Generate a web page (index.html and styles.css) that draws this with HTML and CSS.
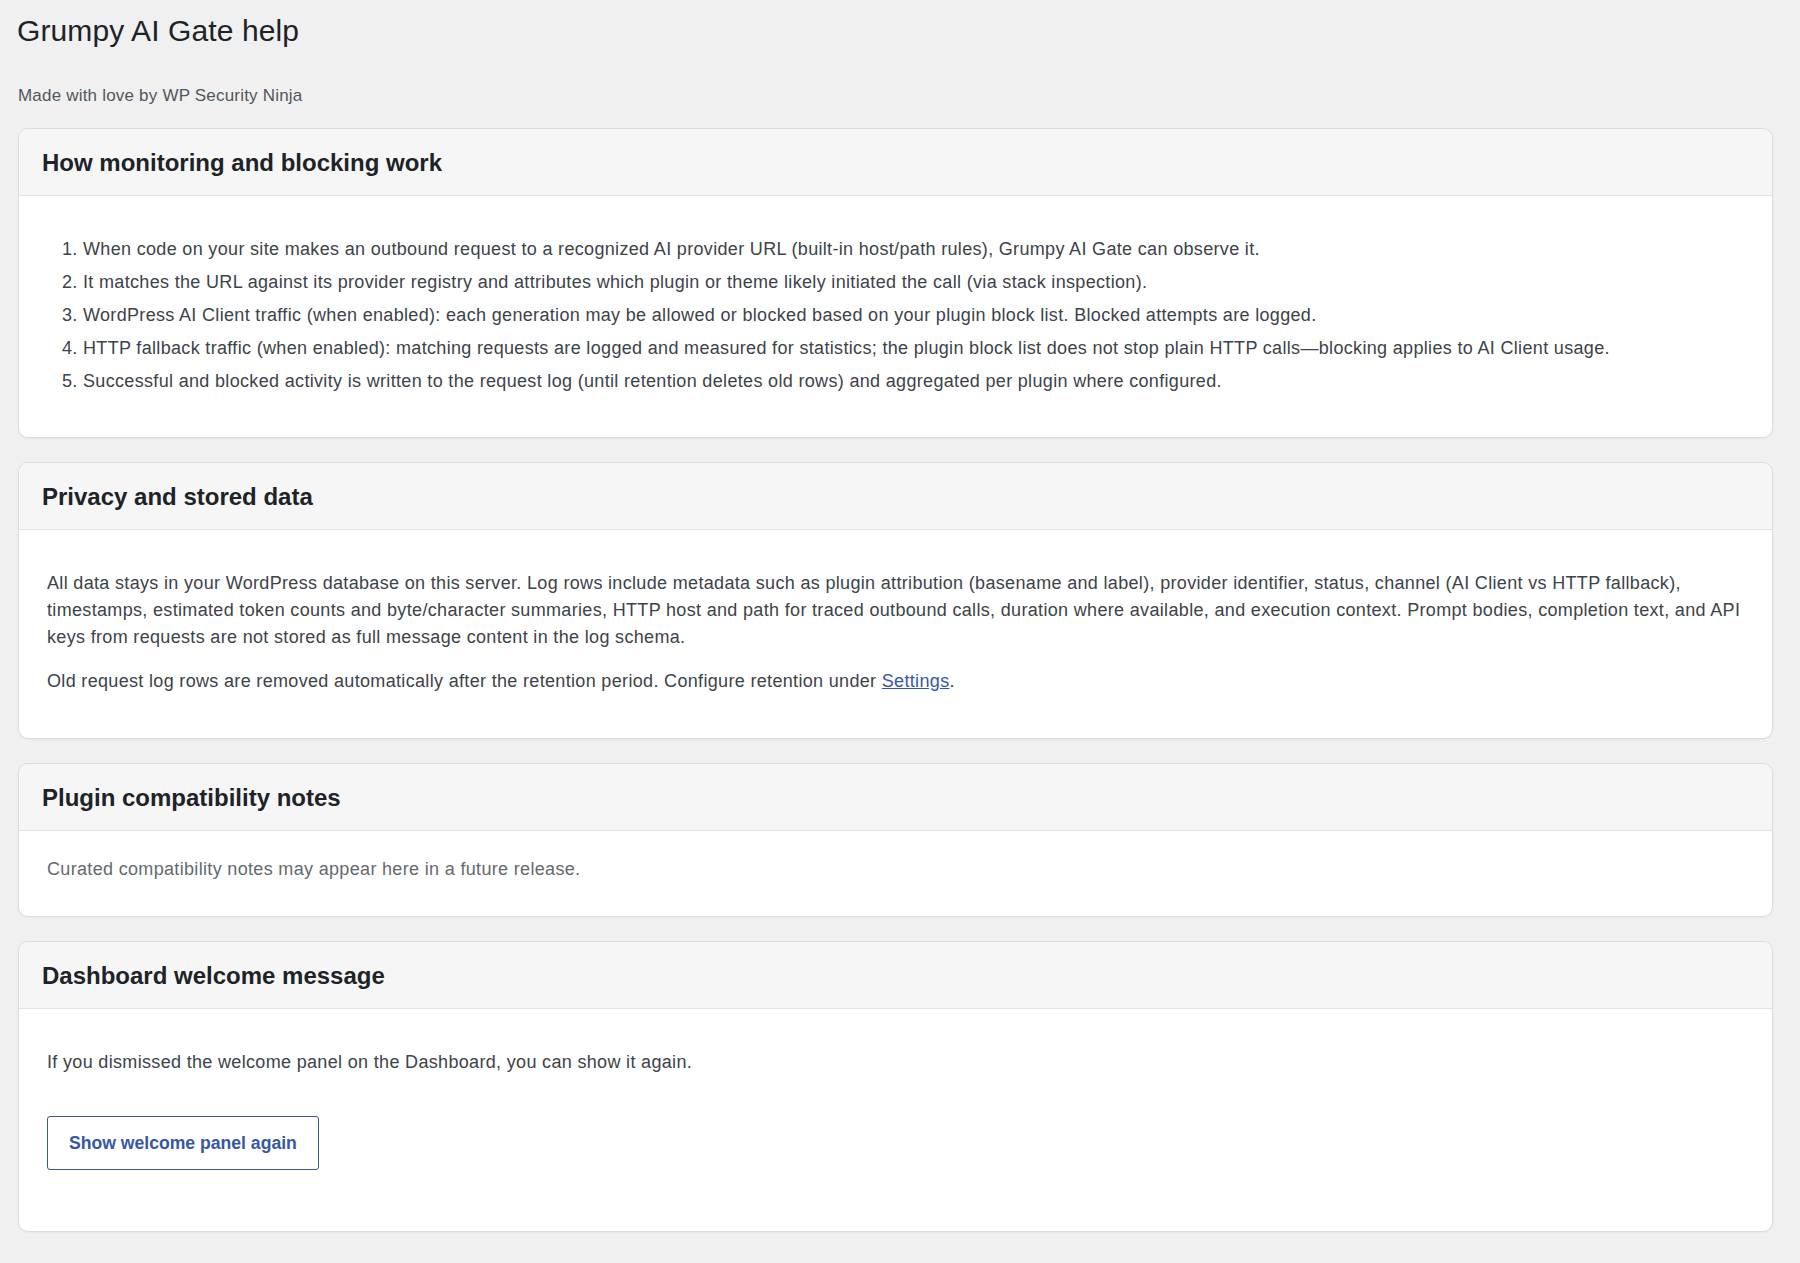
FILE: index.html
```html
<!DOCTYPE html>
<html lang="en">
<head>
    <meta charset="UTF-8">
    <meta name="viewport" content="width=device-width, initial-scale=1.0">
    <title>Grumpy AI Gate help</title>
    <link rel="stylesheet" href="styles.css">
</head>
<body>
    <div class="wrap">
        <h1>Grumpy AI Gate help</h1>
        <p class="byline">Made with love by WP Security Ninja</p>

        <!-- How it works -->
        <div class="card">
            <div class="card-header"><h2>How monitoring and blocking work</h2></div>
            <div class="card-body">
                <ol>
                    <li>When code on your site makes an outbound request to a recognized AI provider URL (built-in host/path rules), Grumpy AI Gate can observe it.</li>
                    <li>It matches the URL against its provider registry and attributes which plugin or theme likely initiated the call (via stack inspection).</li>
                    <li>WordPress AI Client traffic (when enabled): each generation may be allowed or blocked based on your plugin block list. Blocked attempts are logged.</li>
                    <li>HTTP fallback traffic (when enabled): matching requests are logged and measured for statistics; the plugin block list does not stop plain HTTP calls&mdash;blocking applies to AI Client usage.</li>
                    <li>Successful and blocked activity is written to the request log (until retention deletes old rows) and aggregated per plugin where configured.</li>
                </ol>
            </div>
        </div>

        <!-- Privacy -->
        <div class="card">
            <div class="card-header"><h2>Privacy and stored data</h2></div>
            <div class="card-body">
                <p>All data stays in your WordPress database on this server. Log rows include metadata such as plugin attribution (basename and label), provider identifier, status, channel (AI Client vs HTTP fallback), timestamps, estimated token counts and byte/character summaries, HTTP host and path for traced outbound calls, duration where available, and execution context. Prompt bodies, completion text, and API keys from requests are not stored as full message content in the log schema.</p>
                <p>Old request log rows are removed automatically after the retention period. Configure retention under <a href="#">Settings</a>.</p>
            </div>
        </div>

        <!-- Compatibility -->
        <div class="card">
            <div class="card-header"><h2>Plugin compatibility notes</h2></div>
            <div class="card-body compact">
                <p class="description">Curated compatibility notes may appear here in a future release.</p>
            </div>
        </div>

        <!-- Welcome panel -->
        <div class="card">
            <div class="card-header"><h2>Dashboard welcome message</h2></div>
            <div class="card-body">
                <p>If you dismissed the welcome panel on the Dashboard, you can show it again.</p>
                <div class="card-actions">
                    <button class="button" type="button">Show welcome panel again</button>
                </div>
            </div>
        </div>
    </div>
</body>
</html>
```

FILE: styles.css
```css
body { margin: 0; background: #f0f0f1; color: #3c434a; font-family: "Liberation Sans", Arial, sans-serif; font-size: 18px; line-height: 27px; }
.wrap { margin: 0 27px 0 18px; padding-bottom: 30px; }

h1 { margin: 11px 0 0 -1px; font-size: 30px; line-height: 39px; font-weight: 400; color: #1d2327; letter-spacing: 0.1px; }
.byline { margin: 33px 0 20px; font-size: 17px; line-height: 25px; color: #50575e; letter-spacing: 0.2px; }

.card { background: #fff; border: 1px solid #dcdcde; border-radius: 10px; box-shadow: 0 1px 2px rgba(0, 0, 0, 0.04); margin-bottom: 24px; overflow: hidden; }
.card-header { background: #f6f6f7; border-bottom: 1px solid #e2e3e5; padding: 19px 23px 17px; }
.card-header h2 { margin: 0; font-size: 24px; line-height: 30px; font-weight: 700; color: #1d2327; }
.card-body { padding: 23px 22px 26px 28px; letter-spacing: 0.33px; }
.card-body p { margin: 17px 0; }
.card-body ol { margin: 17px 0 16px; padding-left: 36px; }
.card-body li { margin-bottom: 6px; }
.card-body.compact { padding: 25px 22px 33px 28px; }
.card-body.compact p { margin: 0; }
.description { color: #646970; }

a { color: #3558a6; text-decoration: underline; }

.card-actions { margin: 40px 0 35px; }
.button { font-family: inherit; font-size: 17.6px; font-weight: 700; color: #3558a6; background: #fff; border: 1px solid #3f5687; border-radius: 3px; height: 54px; padding: 0 21px; cursor: pointer; }
```
